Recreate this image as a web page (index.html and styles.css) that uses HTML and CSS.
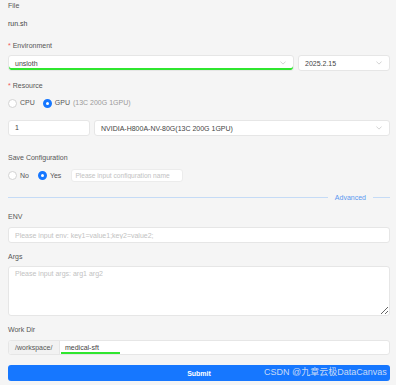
FILE: index.html
```html
<!DOCTYPE html>
<html lang="en">
<head>
    <meta charset="UTF-8">
    <meta name="viewport" content="width=device-width, initial-scale=1.0">
    <title>Run Job</title>
    <link rel="stylesheet" href="styles.css">
</head>
<body>

    <form class="job-form" onsubmit="return false">
        <!-- file -->
        <div class="label label-first">File</div>
        <div class="plain-value">run.sh</div>

        <!-- environment -->
        <div class="label label-env"><span class="req">*</span> Environment</div>
        <div class="row row-env">
            <div class="select select-env focused">
                <span>unsloth</span>
                <svg class="chev" viewBox="0 0 8 5"><polyline points="0.5,0.5 4,4 7.5,0.5"/></svg>
            </div>
            <div class="select select-ver">
                <span>2025.2.15</span>
                <svg class="chev" viewBox="0 0 8 5"><polyline points="0.5,0.5 4,4 7.5,0.5"/></svg>
            </div>
        </div>

        <!-- resource -->
        <div class="label label-gap"><span class="req">*</span> Resource</div>
        <div class="radios radios-res">
            <label class="radio"><span class="dot"></span>CPU</label>
            <label class="radio checked"><span class="dot"></span>GPU <span class="hint">(13C 200G 1GPU)</span></label>
        </div>
        <div class="row row-res">
            <div class="input input-count">1</div>
            <div class="select select-gpu">
                <span>NVIDIA-H800A-NV-80G(13C 200G 1GPU)</span>
                <svg class="chev" viewBox="0 0 8 5"><polyline points="0.5,0.5 4,4 7.5,0.5"/></svg>
            </div>
        </div>

        <!-- save configuration -->
        <div class="label label-save">Save Configuration</div>
        <div class="radios radios-save">
            <label class="radio"><span class="dot"></span>No</label>
            <label class="radio checked"><span class="dot"></span>Yes</label>
            <input class="input input-conf" type="text" placeholder="Please input configuration name">
        </div>

        <div class="divider">
            <span class="line"></span>
            <span class="divider-text">Advanced</span>
            <span class="line line-short"></span>
        </div>

        <!-- advanced -->
        <div class="label label-adv">ENV</div>
        <input class="input input-env" type="text" placeholder="Please input env: key1=value1;key2=value2;">

        <div class="label label-args">Args</div>
        <textarea class="textarea" placeholder="Please input args: arg1 arg2"></textarea>

        <div class="label label-args">Work Dir</div>
        <div class="group">
            <span class="addon">/workspace/</span>
            <div class="group-input"><span class="typed">medical-sft</span></div>
        </div>

        <button class="submit-btn" type="submit">Submit</button>
    </form>

    <div class="watermark">CSDN @九章云极DataCanvas</div>

</body>
</html>
```

FILE: styles.css
```css
body {
    margin: 0;
    background-color: #f5f5f5;
    font-family: "Liberation Sans", Arial, sans-serif;
    font-size: 7px;
    color: #444;
}

.job-form {
    padding: 1px 6px 0 8px;
}

.label {
    height: 10px;
    line-height: 10px;
    color: #555;
}

.req {
    color: #f25656;
}

.plain-value {
    margin-top: 8px;
    height: 10px;
    line-height: 10px;
    color: #444;
}

.label-env {
    margin-top: 12px;
}

.label-gap {
    margin-top: 10px;
}

.label-save {
    margin-top: 17px;
}

.label-adv {
    margin-top: 10px;
}

.label-args {
    margin-top: 9px;
}

.row {
    display: flex;
    gap: 4px;
}

.row-env {
    margin-top: 4px;
}

.row-res {
    margin-top: 12px;
}

.select,
.input,
.textarea,
.group {
    box-sizing: border-box;
    background: white;
    border: 1px solid #e6e6e6;
    border-radius: 3px;
    font-family: inherit;
    font-size: 7px;
    color: #444;
}

.select {
    height: 16px;
    display: flex;
    align-items: center;
    justify-content: space-between;
    padding: 0 7px 0 6px;
}

.select.focused {
    box-shadow: inset 0 -2px 0 #2fe62f;
}

.select-env {
    flex: 1;
}

.select-ver {
    width: 92px;
}

.select-gpu {
    flex: 1;
}

.chev {
    width: 6px;
    height: 4px;
    fill: none;
    stroke: #c4c4c4;
    stroke-width: 1;
}

.input {
    height: 16px;
    line-height: 14px;
    padding: 0 6px;
    outline: none;
    display: block;
}

.input::placeholder,
.textarea::placeholder {
    color: #c2c2c2;
}

.input-count {
    width: 82px;
}

.radios {
    display: flex;
    align-items: center;
    gap: 8px;
    height: 10px;
    line-height: 10px;
}

.radios-res {
    margin-top: 7px;
}

.radios-save {
    margin-top: 6px;
    height: 13px;
    gap: 9px;
}

.radio {
    display: flex;
    align-items: center;
    gap: 3px;
    color: #555;
}

.dot {
    box-sizing: border-box;
    width: 9px;
    height: 9px;
    border-radius: 50%;
    border: 1px solid #d3d3d3;
    background: white;
}

.radio.checked .dot {
    border: 3px solid #1677ff;
}

.hint {
    color: #9a9a9a;
}

.input-conf {
    width: 112px;
    height: 13px;
    line-height: 11px;
    padding: 0 3px;
    margin-left: 1px;
    border-color: #ececec;
    font-size: 6.6px;
}

.divider {
    margin-top: 10px;
    height: 10px;
    display: flex;
    align-items: center;
    gap: 7px;
}

.line {
    flex: 1;
    height: 1px;
    background: #c5dbf6;
}

.line-short {
    flex: none;
    width: 17px;
}

.divider-text {
    color: #5a98f0;
}

.input-env {
    width: 100%;
    margin-top: 5px;
}

.textarea {
    display: block;
    width: 100%;
    height: 50px;
    margin-top: 4px;
    padding: 3px 6px;
    outline: none;
    resize: vertical;
}

.group {
    margin-top: 5px;
    height: 15px;
    display: flex;
    overflow: hidden;
}

.addon {
    width: 51px;
    padding-left: 6px;
    box-sizing: border-box;
    background: #f2f2f2;
    border-right: 1px solid #e6e6e6;
    color: #555;
    line-height: 13px;
}

.group-input {
    flex: 1;
    padding-left: 1px;
}

.typed {
    display: inline-block;
    box-sizing: border-box;
    width: 59px;
    height: 13px;
    line-height: 13px;
    padding-left: 4px;
    box-shadow: inset 0 -2px 0 #2fe62f;
}

.submit-btn {
    display: block;
    width: 100%;
    height: 16px;
    margin-top: 10px;
    border: none;
    border-radius: 3px;
    background: #1677ff;
    color: white;
    font-family: inherit;
    font-size: 7px;
    font-weight: bold;
    cursor: pointer;
}

.watermark {
    position: absolute;
    left: 264px;
    top: 366px;
    font-family: "Liberation Sans", "Noto Sans CJK SC", sans-serif;
    font-size: 9px;
    line-height: 12px;
    color: rgba(232, 236, 244, 0.85);
    white-space: nowrap;
}
```
